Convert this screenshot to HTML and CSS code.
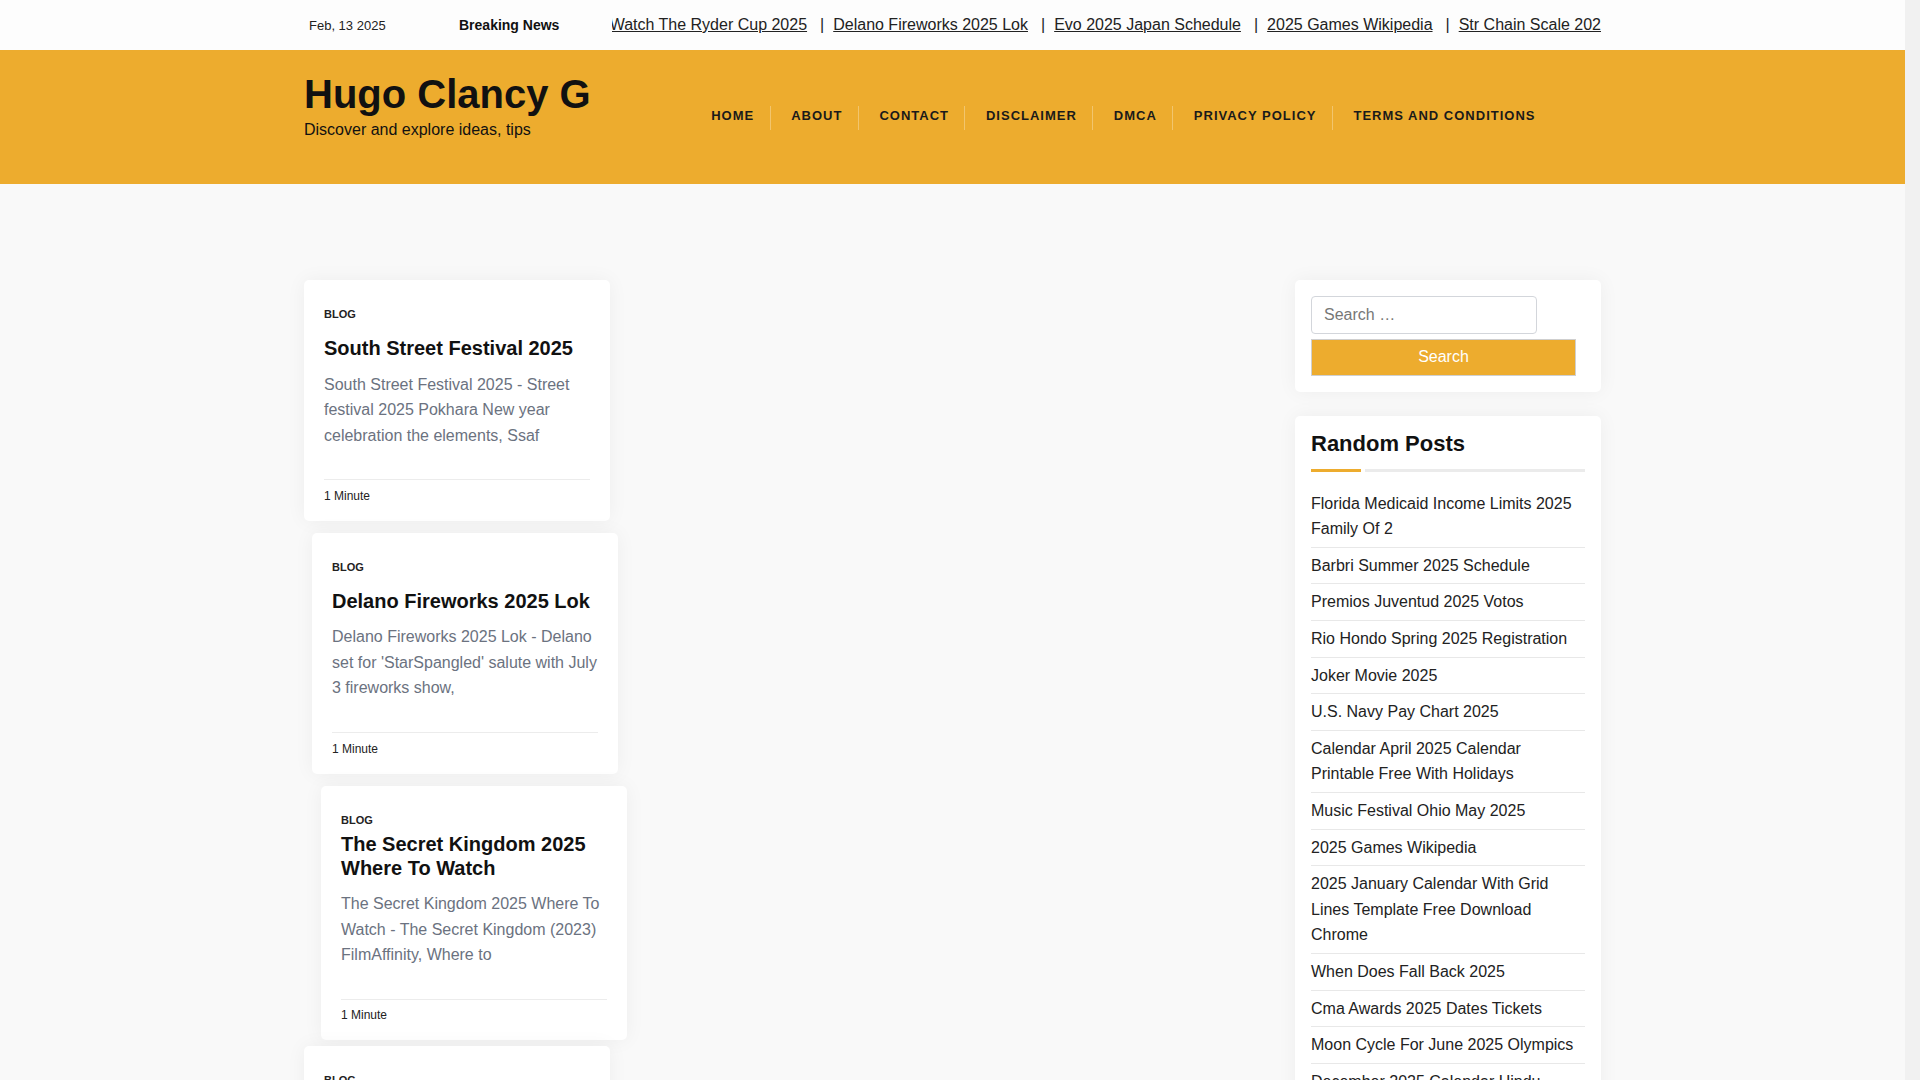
FILE: index.html
```html
<!DOCTYPE html>
<html lang="en">
<head>
<meta charset="utf-8">
<title>Hugo Clancy G</title>
<link rel="stylesheet" href="styles.css">
</head>
<body>
<div class="topbar">
  <div class="container topbar-inner">
    <span class="topbar-date">Feb, 13 2025</span>
    <span class="topbar-label">Breaking News</span>
    <div class="ticker">
      <div class="ticker-track">
        <a href="#">Where To Watch The Ryder Cup 2025</a><span class="sep">|</span>
        <a href="#">Delano Fireworks 2025 Lok</a><span class="sep">|</span>
        <a href="#">Evo 2025 Japan Schedule</a><span class="sep">|</span>
        <a href="#">2025 Games Wikipedia</a><span class="sep">|</span>
        <a href="#">Str Chain Scale 2025</a><span class="sep">|</span>
        <a href="#">South Street Festival 2025</a>
      </div>
    </div>
  </div>
</div>

<header class="site-header">
  <div class="container header-inner">
    <div class="brand">
      <a class="site-title" href="#">Hugo Clancy G</a>
      <p class="site-desc">Discover and explore ideas, tips</p>
    </div>
    <nav class="main-nav">
      <ul>
        <li><a href="#">Home</a></li>
        <li><a href="#">About</a></li>
        <li><a href="#">Contact</a></li>
        <li><a href="#">Disclaimer</a></li>
        <li><a href="#">DMCA</a></li>
        <li><a href="#">Privacy Policy</a></li>
        <li><a href="#">Terms and Conditions</a></li>
      </ul>
    </nav>
  </div>
</header>

<div class="container site-content">
  <main class="posts">
    <article class="card">
      <div class="card-cat">Blog</div>
      <h2 class="card-title">South Street Festival 2025</h2>
      <p class="card-excerpt">South Street Festival 2025 - Street festival 2025 Pokhara New year celebration the elements, Ssaf</p>
      <div class="card-meta">1 Minute</div>
    </article>
    <article class="card card--shift-1">
      <div class="card-cat">Blog</div>
      <h2 class="card-title">Delano Fireworks 2025 Lok</h2>
      <p class="card-excerpt">Delano Fireworks 2025 Lok - Delano set for 'StarSpangled' salute with July 3 fireworks show,</p>
      <div class="card-meta">1 Minute</div>
    </article>
    <article class="card card--shift-2 card--long">
      <div class="card-cat">Blog</div>
      <h2 class="card-title">The Secret Kingdom 2025 Where To Watch</h2>
      <p class="card-excerpt">The Secret Kingdom 2025 Where To Watch - The Secret Kingdom (2023) FilmAffinity, Where to</p>
      <div class="card-meta">1 Minute</div>
    </article>
    <article class="card card--lift">
      <div class="card-cat">Blog</div>
      <h2 class="card-title">Str Chain Scale 2025</h2>
      <p class="card-excerpt">Str Chain Scale 2025 - STR Chain Scale global hotel industry segmentation, classes and</p>
      <div class="card-meta">1 Minute</div>
    </article>
    <article class="card">
      <div class="card-cat">Blog</div>
      <h2 class="card-title">Evo 2025 Japan Schedule</h2>
      <p class="card-excerpt">Evo 2025 Japan Schedule - Evo Japan 2025 full schedule, lineup and the games announced for</p>
      <div class="card-meta">1 Minute</div>
    </article>
    <article class="card">
      <div class="card-cat">Blog</div>
      <h2 class="card-title">2025 Games Wikipedia</h2>
      <p class="card-excerpt">2025 Games Wikipedia - List of upcoming video games scheduled for release in the year of</p>
      <div class="card-meta">1 Minute</div>
    </article>
    <article class="card card--long">
      <div class="card-cat">Blog</div>
      <h2 class="card-title">Where To Watch The Ryder Cup 2025</h2>
      <p class="card-excerpt">Where To Watch The Ryder Cup 2025 - How to watch the Ryder Cup live stream, TV channel and</p>
      <div class="card-meta">1 Minute</div>
    </article>
    <article class="card">
      <div class="card-cat">Blog</div>
      <h2 class="card-title">Joker Movie 2025</h2>
      <p class="card-excerpt">Joker Movie 2025 - Joker Folie a Deux release date, cast, trailer and everything we know</p>
      <div class="card-meta">1 Minute</div>
    </article>
    <article class="card">
      <div class="card-cat">Blog</div>
      <h2 class="card-title">Barbri Summer 2025 Schedule</h2>
      <p class="card-excerpt">Barbri Summer 2025 Schedule - Barbri bar review course calendar for the summer exam, study</p>
      <div class="card-meta">1 Minute</div>
    </article>
    <article class="card">
      <div class="card-cat">Blog</div>
      <h2 class="card-title">Premios Juventud 2025 Votos</h2>
      <p class="card-excerpt">Premios Juventud 2025 Votos - Premios Juventud nominados, como votar y la lista completa de</p>
      <div class="card-meta">1 Minute</div>
    </article>
    <article class="card card--long">
      <div class="card-cat">Blog</div>
      <h2 class="card-title">Rio Hondo Spring 2025 Registration</h2>
      <p class="card-excerpt">Rio Hondo Spring 2025 Registration - Rio Hondo College class schedule, registration dates and</p>
      <div class="card-meta">1 Minute</div>
    </article>
    <article class="card">
      <div class="card-cat">Blog</div>
      <h2 class="card-title">U.S. Navy Pay Chart 2025</h2>
      <p class="card-excerpt">U.S. Navy Pay Chart 2025 - Military basic pay table for enlisted and officer ranks in the</p>
      <div class="card-meta">1 Minute</div>
    </article>
    <article class="card">
      <div class="card-cat">Blog</div>
      <h2 class="card-title">Music Festival Ohio May 2025</h2>
      <p class="card-excerpt">Music Festival Ohio May 2025 - Ohio music festivals guide with dates, lineups and tickets for</p>
      <div class="card-meta">1 Minute</div>
    </article>
    <article class="card">
      <div class="card-cat">Blog</div>
      <h2 class="card-title">When Does Fall Back 2025</h2>
      <p class="card-excerpt">When Does Fall Back 2025 - Daylight saving time ends and clocks go back one hour on the</p>
      <div class="card-meta">1 Minute</div>
    </article>
    <article class="card">
      <div class="card-cat">Blog</div>
      <h2 class="card-title">Cma Awards 2025 Dates Tickets</h2>
      <p class="card-excerpt">Cma Awards 2025 Dates Tickets - CMA Awards date, host, venue and how to get tickets for the</p>
      <div class="card-meta">1 Minute</div>
    </article>
    <article class="card card--long">
      <div class="card-cat">Blog</div>
      <h2 class="card-title">Moon Cycle For June 2025 Olympics</h2>
      <p class="card-excerpt">Moon Cycle For June 2025 Olympics - Lunar calendar with full moon, new moon and phases for</p>
      <div class="card-meta">1 Minute</div>
    </article>
    <article class="card">
      <div class="card-cat">Blog</div>
      <h2 class="card-title">December 2025 Calendar</h2>
      <p class="card-excerpt">December 2025 Calendar - Printable monthly calendar with holidays, festivals and observances</p>
      <div class="card-meta">1 Minute</div>
    </article>
    <article class="card">
      <div class="card-cat">Blog</div>
      <h2 class="card-title">Joker Movie 2025 Cast</h2>
      <p class="card-excerpt">Joker Movie 2025 Cast - Full cast and crew list, characters and the story of the sequel to</p>
      <div class="card-meta">1 Minute</div>
    </article>
  </main>

  <aside class="sidebar">
    <section class="widget">
      <form class="search-form" action="#">
        <input class="search-field" type="search" placeholder="Search &hellip;">
        <button class="search-submit" type="button">Search</button>
      </form>
    </section>
    <section class="widget widget--posts">
      <h2 class="widget-title">Random Posts</h2>
      <div class="widget-line"><span class="widget-line-accent"></span><span class="widget-line-rest"></span></div>
      <ul class="post-links">
        <li><a href="#">Florida Medicaid Income Limits 2025 Family Of 2</a></li>
        <li><a href="#">Barbri Summer 2025 Schedule</a></li>
        <li><a href="#">Premios Juventud 2025 Votos</a></li>
        <li><a href="#">Rio Hondo Spring 2025 Registration</a></li>
        <li><a href="#">Joker Movie 2025</a></li>
        <li><a href="#">U.S. Navy Pay Chart 2025</a></li>
        <li><a href="#">Calendar April 2025 Calendar Printable Free With Holidays</a></li>
        <li><a href="#">Music Festival Ohio May 2025</a></li>
        <li><a href="#">2025 Games Wikipedia</a></li>
        <li><a href="#">2025 January Calendar With Grid Lines Template Free Download Chrome</a></li>
        <li><a href="#">When Does Fall Back 2025</a></li>
        <li><a href="#">Cma Awards 2025 Dates Tickets</a></li>
        <li><a href="#">Moon Cycle For June 2025 Olympics</a></li>
        <li><a href="#">December 2025 Calendar Hindu</a></li>
        <li><a href="#">Str Chain Scale 2025</a></li>
        <li><a href="#">Evo 2025 Japan Schedule</a></li>
        <li><a href="#">Delano Fireworks 2025 Lok</a></li>
        <li><a href="#">South Street Festival 2025</a></li>
      </ul>
    </section>
  </aside>
</div>

<footer class="site-footer">
  <div class="container footer-inner">Copyright &copy; 2025 Hugo Clancy G. All rights reserved.</div>
</footer>
</body>
</html>
```

FILE: styles.css
```css
html {
  margin: 0;
  padding: 0;
  background: #f1f1f1;
}

body {
  margin: 0 15px 0 0;
  padding: 0;
  background: #f9f9f9;
  font-family: "Liberation Sans", Arial, sans-serif;
  color: #222;
}

.container {
  width: 1297px;
  margin: 0 auto;
  box-sizing: border-box;
}

/* Top bar */
.topbar {
  background: #fdfdfd;
}

.topbar-inner {
  display: flex;
  align-items: center;
  height: 50px;
}

.topbar-date {
  flex-shrink: 0;
  width: 150px;
  margin-left: 5px;
  font-size: 13px;
  color: #222;
}

.topbar-label {
  flex-shrink: 0;
  width: 153px;
  font-size: 14px;
  font-weight: 700;
  color: #111;
}

.ticker {
  flex: 1;
  min-width: 0;
  overflow: hidden;
}

.ticker-track {
  display: flex;
  white-space: nowrap;
  font-size: 16px;
  line-height: 20px;
  transform: translateX(-75px);
}

.ticker-track a {
  color: #222;
  text-decoration: underline;
}

.sep {
  margin: 0 9px 0 13px;
  color: #222;
}

/* Header */
.site-header {
  background: #edac2e;
  height: 134px;
}

.header-inner {
  display: flex;
  justify-content: space-between;
  height: 100%;
}

.brand {
  padding-top: 20px;
}

.site-title {
  display: block;
  font-size: 40px;
  font-weight: 700;
  line-height: 48px;
  color: #111;
  text-decoration: none;
}

.site-desc {
  margin: 0;
  font-size: 16px;
  line-height: 24px;
  color: #111;
}

.main-nav {
  align-self: center;
  margin: 2px 50px 0 0;
}

.main-nav ul {
  display: flex;
  list-style: none;
  margin: 0;
  padding: 0;
}

.main-nav li {
  display: flex;
  height: 24px;
}

.main-nav li + li {
  border-left: 1px solid rgba(255, 255, 255, 0.3);
}

.main-nav a {
  padding: 2px 15.5px 0 20.5px;
  font-size: 13px;
  font-weight: 700;
  letter-spacing: 1px;
  line-height: 16px;
  text-transform: uppercase;
  color: #1a1a1a;
  text-decoration: none;
}

/* Content */
.site-content {
  display: grid;
  grid-template-columns: minmax(0, 1fr) 306px;
  column-gap: 15px;
  align-items: start;
  padding-top: 96px;
}

.posts {
  display: flex;
  flex-direction: column;
  align-items: flex-start;
  gap: 12px;
}

.card {
  width: 306px;
  box-sizing: border-box;
  padding: 26px 20px 16px;
  background: #fff;
  border-radius: 5px;
  box-shadow: 0 0 20px rgba(0, 0, 0, 0.05);
}

.card--shift-1 {
  margin-left: 8px;
}

.card--shift-2 {
  margin-left: 17px;
}

.card--lift {
  margin-top: -6px;
}

.card-cat {
  font-size: 11px;
  font-weight: 700;
  line-height: 16.5px;
  text-transform: uppercase;
  color: #222;
}

.card-title {
  margin: 13.5px 0 0;
  font-size: 20px;
  font-weight: 700;
  line-height: 24px;
  color: #111;
}

.card--long .card-title {
  margin-top: 3.5px;
}

.card-excerpt {
  margin: 11.5px 0 0;
  font-size: 16px;
  line-height: 25.6px;
  color: #6b7280;
}

.card-meta {
  margin-top: 31px;
  padding-top: 6.5px;
  border-top: 1px solid #ececec;
  font-size: 12px;
  line-height: 18px;
  color: #222;
}

/* Sidebar */
.widget {
  margin-bottom: 24px;
  padding: 16px;
  background: #fff;
  border-radius: 5px;
  box-shadow: 0 0 20px rgba(0, 0, 0, 0.05);
}

.search-field {
  display: block;
  width: 226px;
  height: 37.5px;
  box-sizing: border-box;
  margin: 0;
  padding: 0 12px;
  border: 1px solid #d3d6db;
  border-radius: 4px;
  background: #fff;
  font-family: "Liberation Sans", Arial, sans-serif;
  font-size: 16px;
  color: #333;
}

.search-field::placeholder {
  color: #777;
}

.search-submit {
  display: block;
  width: 265px;
  height: 37px;
  margin: 5px 0 0;
  padding: 0;
  border: 1px solid #cfcfcf;
  background: #edac2e;
  font-family: "Liberation Sans", Arial, sans-serif;
  font-size: 16px;
  color: #fff;
}

.widget--posts {
  padding-top: 15px;
}

.widget-title {
  margin: 0;
  font-size: 22px;
  font-weight: 700;
  line-height: 26.4px;
  color: #111;
}

.widget-line {
  display: flex;
  gap: 4px;
  height: 3px;
  margin-top: 11.7px;
}

.widget-line-accent {
  width: 50px;
  background: #edac2e;
}

.widget-line-rest {
  flex: 1;
  background: #ebebeb;
}

.post-links {
  list-style: none;
  margin: 14px 0 0;
  padding: 0;
}

.post-links li {
  padding: 5px 0;
  font-size: 16px;
  line-height: 25.6px;
}

.post-links li + li {
  border-top: 1px solid #e8e8e8;
}

.post-links a {
  color: #222;
  text-decoration: none;
}

/* Footer */
.site-footer {
  margin-top: 60px;
  padding: 30px 0;
  background: #fff;
  font-size: 14px;
  color: #555;
}

.footer-inner {
  text-align: center;
}
```
